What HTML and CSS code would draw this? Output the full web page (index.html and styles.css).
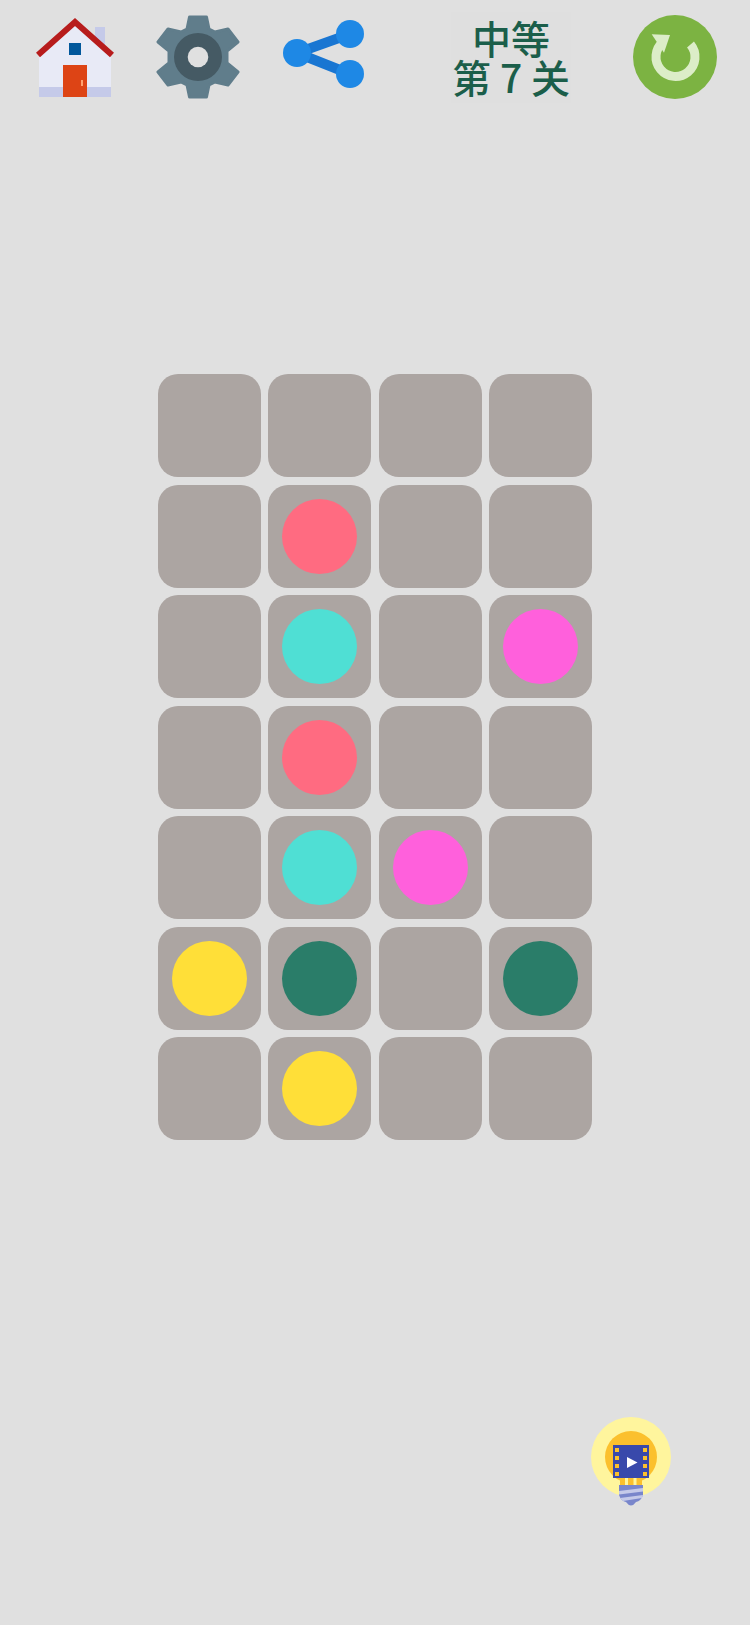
FILE: index.html
```html
<!DOCTYPE html>
<html lang="zh">
<head>
    <meta charset="UTF-8">
    <meta name="viewport" content="width=device-width, initial-scale=1.0">
    <title>中等 第 7 关</title>
    <link rel="stylesheet" href="styles.css">
</head>
<body>
    <header class="toolbar">
        <button class="tool tool-home" aria-label="home">
            <svg width="84" height="84" viewBox="0 0 84 84">
                <rect x="62" y="12" width="10" height="24" fill="#c5cae9"/>
                <path d="M42 7 L78 38 V82 H6 V38 Z" fill="#e8eaf6"/>
                <rect x="6" y="72" width="72" height="10" fill="#c5cae9"/>
                <rect x="30" y="50" width="24" height="32" fill="#dd4415"/>
                <rect x="48" y="65" width="2" height="6" fill="#ffa270"/>
                <rect x="36" y="28" width="12" height="12" fill="#01579b"/>
                <path d="M5 40 L42 7 L79 40" fill="none" stroke="#b71c1c" stroke-width="6"/>
            </svg>
        </button>
        <button class="tool tool-gear" aria-label="settings">
            <svg width="84" height="84" viewBox="-42 -42 84 84">
                <path fill="#607d8b" stroke="#607d8b" stroke-width="3" stroke-linejoin="round" d="M-8.500 -40 L8.500 -40 L11 -28 L17 -25 L30 -28 L40 -15 L29 -6 L29 6 L40 15 L30 28 L17 25 L11 28 L8.500 40 L-8.500 40 L-11 28 L-17 25 L-30 28 L-40 15 L-29 6 L-29 -6 L-40 -15 L-30 -28 L-17 -25 L-11 -28 Z"/>
                <circle r="24" fill="#455a64"/>
                <circle r="10.3" fill="#e0e0e0"/>
            </svg>
        </button>
        <button class="tool tool-share" aria-label="share">
            <svg width="84" height="72" viewBox="0 0 84 72">
                <path d="M14 33 L67 14 M14 33 L67 54" stroke="#1976d2" stroke-width="10" fill="none"/>
                <circle cx="14" cy="33" r="14" fill="#1e88e5"/>
                <circle cx="67" cy="14" r="14" fill="#1e88e5"/>
                <circle cx="67" cy="54" r="14" fill="#1e88e5"/>
            </svg>
        </button>
        <div class="level">
            <div class="level-line">中等</div>
            <div class="level-line">第 7 关</div>
        </div>
        <button class="tool tool-reload" aria-label="reload">
            <svg width="84" height="84" viewBox="0 0 84 84">
                <circle cx="42" cy="42" r="42" fill="#7cb342"/>
                <path d="M57.500 29.500 A19.500 19.500 0 1 1 30 27" fill="none" stroke="#dcedc8" stroke-width="9"/>
                <path d="M18.700 19.300 L37 20 L31 37.700 Z" fill="#dcedc8"/>
            </svg>
        </button>
    </header>

    <main class="board">
        <div class="cell"></div>
        <div class="cell"></div>
        <div class="cell"></div>
        <div class="cell"></div>

        <div class="cell"></div>
        <div class="cell"><span class="dot red"></span></div>
        <div class="cell"></div>
        <div class="cell"></div>

        <div class="cell"></div>
        <div class="cell"><span class="dot cyan"></span></div>
        <div class="cell"></div>
        <div class="cell"><span class="dot pink"></span></div>

        <div class="cell"></div>
        <div class="cell"><span class="dot red"></span></div>
        <div class="cell"></div>
        <div class="cell"></div>

        <div class="cell"></div>
        <div class="cell"><span class="dot cyan"></span></div>
        <div class="cell"><span class="dot pink"></span></div>
        <div class="cell"></div>

        <div class="cell"><span class="dot yellow"></span></div>
        <div class="cell"><span class="dot green"></span></div>
        <div class="cell"></div>
        <div class="cell"><span class="dot green"></span></div>

        <div class="cell"></div>
        <div class="cell"><span class="dot yellow"></span></div>
        <div class="cell"></div>
        <div class="cell"></div>
    </main>

    <button class="hint" aria-label="hint">
        <svg width="80" height="90" viewBox="0 0 80 90">
            <circle cx="40" cy="40" r="40" fill="#fff59d"/>
            <circle cx="40" cy="40" r="26" fill="#fbc02d"/>
            <rect x="29" y="60" width="22" height="9" fill="#fbc02d"/>
            <path d="M34 61 h3 v7 h-3 z M42.500 61 h3 v7 h-3 z" fill="#fff59d"/>
            <path d="M28 68 H52 V78 Q50 84 45 85 Q40 92 35 85 Q30 84 28 78 Z" fill="#7986cb"/>
            <path d="M28 74 L52 71 V74.500 L28 77.500 Z M29 81 L52 78 L51 81 L32 84 Z" fill="#c5cae9"/>
            <rect x="22" y="28" width="36" height="33" fill="#3949ab"/>
            <path d="M24 31 h4 v4 h-4 z M24 39 h4 v4 h-4 z M24 47 h4 v4 h-4 z M24 55 h4 v4 h-4 z M52 31 h4 v4 h-4 z M52 39 h4 v4 h-4 z M52 47 h4 v4 h-4 z M52 55 h4 v4 h-4 z" fill="#fbc02d"/>
            <path d="M36 40 L46.500 45.500 L36 51 Z" fill="#fff"/>
        </svg>
    </button>
</body>
</html>
```
FILE: styles.css
```css
body {
    margin: 0;
    width: 750px;
    height: 1625px;
    position: relative;
    overflow: hidden;
    background-color: #e0e0e0;
    font-family: "Noto Sans CJK SC", "Liberation Sans", sans-serif;
}
button {
    padding: 0;
    border: none;
    background: none;
    display: block;
}
svg {
    display: block;
}
.toolbar {
    display: flex;
    align-items: flex-start;
    height: 100px;
    padding: 15px 0 0 33px;
}
.tool-gear {
    margin-left: 39px;
}
.tool-share {
    margin: 5px 0 0 43px;
}
.level {
    width: 120px;
    height: 91px;
    margin: -3px 0 0 84px;
    padding-top: 6px;
    box-sizing: border-box;
    white-space: nowrap;
    text-align: center;
    font-size: 39px;
    font-weight: 500;
    color: #1b5e4a;
    background-color: #dfdfdf;
}
.level-line {
    height: 39px;
    line-height: 39px;
}
.tool-reload {
    margin-left: 62px;
}
.board {
    display: grid;
    grid-template-columns: repeat(4, 103px);
    grid-auto-rows: 103px;
    gap: 7.5px 7.4px;
    margin: 259px 0 0 158px;
}
.cell {
    display: flex;
    align-items: center;
    justify-content: center;
    background-color: #aca5a2;
    border-radius: 20px;
}
.dot {
    width: 75px;
    height: 75px;
    border-radius: 50%;
}
.red {
    background-color: #ff6b81;
}
.cyan {
    background-color: #4fdfd4;
}
.pink {
    background-color: #ff60dc;
}
.yellow {
    background-color: #ffdf38;
}
.green {
    background-color: #2a7d69;
}
.hint {
    position: absolute;
    left: 591px;
    top: 1417px;
}
```
